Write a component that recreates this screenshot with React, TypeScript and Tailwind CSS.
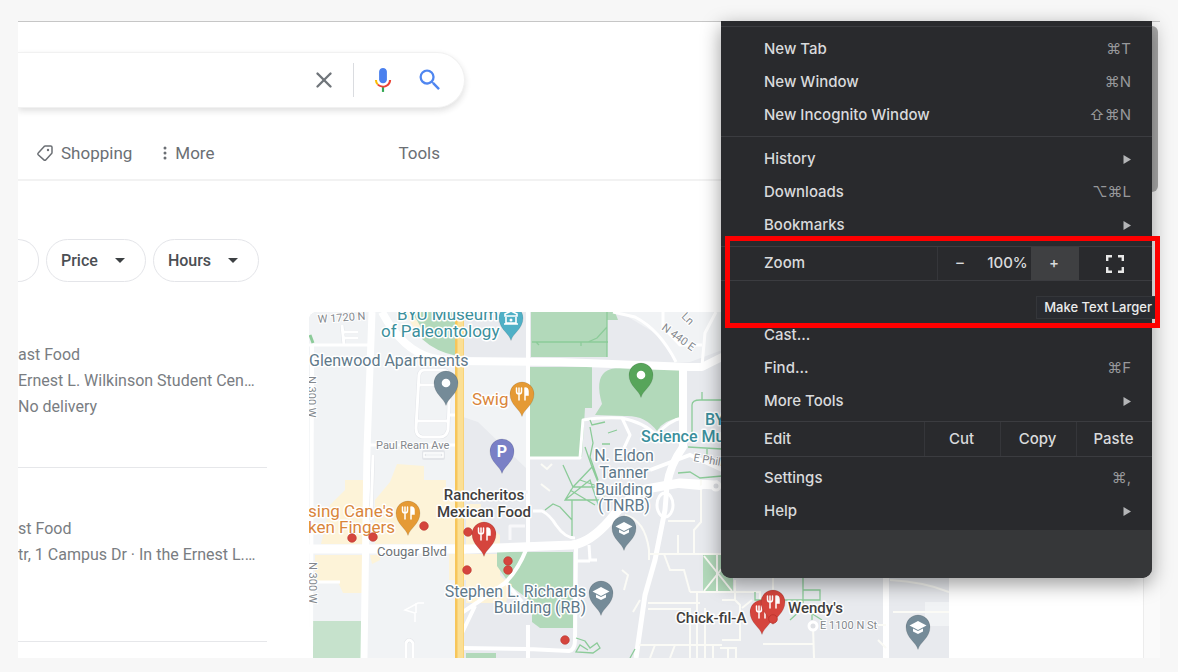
import type { ReactNode } from "react";
import { X } from "lucide-react";

const shopResults = [
  { id: 1, lines: ["ast Food", "Ernest L. Wilkinson Student Cen…", "No delivery"] },
  { id: 2, lines: ["st Food", "tr, 1 Campus Dr · In the Ernest L.…"] },
];

export default function App() {
  return (
    <div className="min-h-screen bg-[#f7f7f7] px-[18px] pt-[21px] pb-[14px] font-[Roboto,sans-serif]">
      <div className="relative bg-white border-t border-[#c6c6c6]">
        {/* Page */}
        <div className="overflow-hidden pr-[17px]">
          <SearchBar />
          <Tabs />
          <Filters />
          <div className="flex items-start gap-[42px] mt-[30px]">
            <ResultList />
            <div className="flex-1 max-w-[640px] h-[346px] overflow-hidden rounded-tl-lg">
              <CampusMap />
            </div>
          </div>
        </div>

        {/* Scrollbar */}
        <div className="absolute inset-y-0 right-0 w-[17px] bg-[#fafafa] border-l border-[#ececec]">
          <div className="ml-0.5 mt-1 h-[166px] w-3 rounded-full bg-[#ababab]" />
        </div>

        <ChromeMenu />
      </div>
    </div>
  );
}

function SearchBar() {
  return (
    <form className="mt-[30px] flex h-14 w-[447px] items-center rounded-r-full border border-l-0 border-[#f1f1f1] bg-white pr-5 shadow-[0_3px_6px_rgba(32,33,36,0.14)]">
      <input aria-label="Search" className="min-w-0 flex-1 bg-transparent outline-none" />
      <button type="button" aria-label="Clear" className="text-[#70757a]">
        <X className="h-[26px] w-[26px]" strokeWidth={2.2} />
      </button>
      <div className="ml-4 h-[34px] w-px bg-[#dadce0]" />
      <button type="button" aria-label="Search by voice" className="ml-4">
        <svg viewBox="0 0 24 24" className="h-[26px] w-[26px]">
          <path fill="#4a80ee" d="M12 15c1.9 0 3.6-1.4 3.6-3.2V4.3C15.600 2.500 13.900 1 12 1S8.400 2.500 8.400 4.300v7.500C8.400 13.600 10.100 15 12 15z" />
          <path fill="#34a853" d="M11 18.500h2V23h-2z" />
          <path fill="#fbbc04" d="M6.500 16.700A7 7 0 0 1 4.500 12h2c0 1.500.6 2.800 1.500 3.700z" />
          <path fill="#ea4335" d="M12 17.300c-1.500 0-3-.6-4-1.600l-1.500 1c1.300 1.500 3.300 2.300 5.500 2.300 4.200 0 7.500-3 7.500-7h-2c0 3-2.500 5.300-5.500 5.300z" />
        </svg>
      </button>
      <button type="submit" aria-label="Google Search" className="ml-5">
        <svg viewBox="0 0 24 24" className="h-7 w-7">
          <path
            fill="#4f86f0"
            d="M15.500 14h-.79l-.28-.27A6.470 6.470 0 0 0 16 9.500 6.500 6.500 0 1 0 9.500 16c1.610 0 3.090-.59 4.230-1.570l.27.28v.79l5 4.990L20.490 19l-4.990-5zm-6 0C7.010 14 5 11.990 5 9.500S7.010 5 9.500 5 14 7.010 14 9.500 11.990 14 9.500 14z"
          />
        </svg>
      </button>
    </form>
  );
}

function Tabs() {
  return (
    <div className="-mr-[17px] border-b-2 border-[#f2f2f2] pt-[33px] pb-[14px]">
      <nav className="flex w-[422px] items-center pl-[18px] text-[17px] leading-6 text-[#6b6f74]">
        <a href="#shopping" className="flex items-center gap-[7px]">
          <svg viewBox="0 0 18 18" className="h-[18px] w-[18px]" fill="none" stroke="currentColor" strokeWidth="1.500">
            <path d="M9.200 2h5.500c.8 0 1.300.5 1.300 1.300v5.300c0 .4-.1.700-.4 1L9.700 15.900c-.5.5-1.300.5-1.800 0L2.200 10.700c-.5-.5-.5-1.200 0-1.700L8.200 2.400c.3-.3.600-.4 1-.4z" />
            <circle cx="12" cy="6" r="1.200" fill="currentColor" stroke="none" />
          </svg>
          Shopping
        </a>
        <a href="#more" className="ml-[31px] flex items-center gap-2">
          <svg viewBox="0 0 4 16" className="h-4 w-1" fill="currentColor">
            <circle cx="2" cy="3" r="1.500" />
            <circle cx="2" cy="8" r="1.500" />
            <circle cx="2" cy="13" r="1.500" />
          </svg>
          More
        </a>
        <button className="ml-auto">Tools</button>
      </nav>
    </div>
  );
}

function Filters() {
  return (
    <div className="mt-[58px] flex gap-[7px] text-[16px] font-medium text-[#4b4f54]">
      <div className="h-[43px] w-[21px] rounded-r-full border border-l-0 border-[#e4e5e9]" />
      <FilterChip label="Price" />
      <FilterChip label="Hours" />
    </div>
  );
}

function FilterChip({ label }: { label: string }) {
  return (
    <button className="flex h-[43px] items-center gap-[17px] rounded-full border border-[#e4e5e9] pl-[14px] pr-5">
      {label}
      <svg viewBox="0 0 10 5" className="h-[5px] w-[10px]" fill="#3c4043">
        <path d="M0 0h10L5 5z" />
      </svg>
    </button>
  );
}

function ResultList() {
  return (
    <ul className="w-[249px] shrink-0 text-[16px] text-[#797d82]">
      {shopResults.map((r) => (
        <li key={r.id} className="border-b border-[#e6e7ea] pt-[30px] pb-[47px] last:pt-12 last:pb-[73px]">
          {r.lines.map((line) => (
            <p key={line} className="whitespace-nowrap leading-[26px]">
              {line}
            </p>
          ))}
        </li>
      ))}
    </ul>
  );
}

/* ---------- Map ---------- */

function Pin({ x, y, color, children }: { x: number; y: number; color: string; children?: ReactNode }) {
  return (
    <g transform={`translate(${x} ${y})`}>
      <path d="M0 22.500C-2 15-12 11-12 0A12 12 0 0 1 12 0C12 11 2 15 0 22.500Z" fill={color} stroke="#00000022" strokeWidth="0.800" />
      {children}
    </g>
  );
}

function Fork() {
  return (
    <g fill="none" stroke="#fff" strokeWidth="1.500" strokeLinecap="round">
      <path d="M-5.500-6v3.500q0 2.500 2.500 2.500t2.500-2.500V-6M-3-6V6" />
      <path d="M3-6V6M3-6q3 0 3 3.500V1H3" fill="#fff" />
    </g>
  );
}

function GradCap() {
  return (
    <g fill="#fff">
      <path d="M0-6L-8.500-1.500 0 3 8.500-1.500Z" />
      <path d="M-5 1.500V4.500L0 7 5 4.500V1.500L0 4Z" />
    </g>
  );
}

function CampusMap() {
  const food = "#d5453d";
  const orange = "#e59a35";
  const slate = "#758b98";
  return (
    <svg viewBox="309 312 640 346" preserveAspectRatio="xMinYMin slice" className="h-full w-full" role="img" aria-label="Map of restaurants near campus">
      <rect x="309" y="312" width="640" height="346" fill="#e8eaee" />
      <path d="M309 312H528V470L466 420V560L456 658H309Z" fill="#f1f3f5" />
      <path d="M463 312H528V358H463ZM463 417L478 422 528 470V545H463Z" fill="#e8eaee" />
      <path d="M620 312H722V350L690 362H676L655 333Z" fill="#f1f3f5" />

      {/* Commercial blocks */}
      <g fill="#fdf3d8">
        <path d="M397 464L424 466V480H446V490H456V544H375V500L390 482Z" />
        <path d="M321 544L330 505 345 490V480H363V544ZM315 555H362V593H343L338 582H315Z" />
        <path d="M466 504H481V520L500 535V545H466ZM449 554H500V575L510 585 506 603H466V580H449ZM370 555H380V560L372 564ZM404 312H428L418 334Z" />
      </g>

      {/* Parks */}
      <g fill="#b2d9ba">
        <path d="M410 312H457V356Q436 352 422 339 424 326 410 312Z" />
        <path d="M531 312H615L618 320H607V357H531ZM530 367H592V408H585L582 457H530Z" />
        <path d="M595 415L602 404Q595 380 605 372 610 368 620 368L680 370V418Q663 420 657 431 645 415 625 416Z" />
        <path d="M497 552H573V628H540L532 622V602L512 587 497 566ZM466 653H496V658H466Z" />
        <path d="M703 555H733V592H703Z" />
      </g>
      <path d="M313 621H361V658H313Z" fill="#c6e2cc" />
      <path d="M949 602H925V626H949Z" fill="#f1f3f5" />

      {/* Wide roads */}
      <g fill="none" stroke="#fff" strokeLinejoin="round">
        <path d="M382 312Q402 350 432 358 445 361 456 361L560 362 690 367H702L724 356" strokeWidth="8" />
        <path d="M372 312L367 450 364 658" strokeWidth="7" />
        <path d="M309 549H470L572 545Q590 543 610 520 628 496 646 489L680 483 715 485" strokeWidth="9" />
        <path d="M683 367V447Q670 465 667 485" strokeWidth="8" />
        <path d="M667 485L665 510 655 560 645 595 636 658" strokeWidth="5" />
        <path d="M312 345L311 658" strokeWidth="4" />
        <path d="M886 575V658" strokeWidth="6" />
        <path d="M528 312V545M528 625V658M462 648L528 649 569 651Q575 650 575 640L576 548" strokeWidth="4" />
        <path d="M460 614L478 602 505 583Q518 570 526 550M462 633L475 606M507 584L522 602" strokeWidth="4" />
      </g>

      {/* Small streets */}
      <g fill="none" stroke="#e3e5e9" strokeWidth="4" strokeLinejoin="round">
        <path d="M424 370H442Q450 370 450 380L448 430Q446 438 438 437H422Q416 436 416 428L419 375Q420 370 424 370ZM419 385H448M417 421H448M424 452H443V458H424Z" />
        <path d="M373 455L371 520M406 658V643Q409 637 413 643V658M342 325L344 345M344 332H358M344 338H358" />
      </g>
      <g fill="none" stroke="#fff" strokeWidth="3" strokeLinejoin="round">
        <path d="M309 345H368M342 325L344 345M344 332H358M344 338H358M370 445H458" />
        <path d="M424 370H442Q450 370 450 380L448 430Q446 438 438 437H422Q416 436 416 428L419 375Q420 370 424 370ZM419 385H448M417 421H448M450 415H458" />
        <path d="M373 455L371 520M406 658V643Q409 637 413 643V658M311 582H340" />
        <path d="M528 458H580L583 420Q600 417 622 418 645 423 656 435 670 420 682 418M622 418L630 435 624 448" />
        <path d="M613 312L635 317Q660 330 676 362M663 312V327L680 345H702M716 312L705 333 702 366" />
        <path d="M533 511H542Q550 515 556 525 565 538 575 538M589 545L590 560H597M577 561H590" />
        <path d="M525 526H510V540M528 492H515" stroke="#f8f8fa" />
        <ellipse cx="665" cy="505" rx="8" ry="12" />
      </g>
      <g fill="none" stroke="#fff" strokeWidth="1.500">
        <path d="M424 603H418L405 610 415 613V622M416 603V613M424 453H443V457H424Z" />
      </g>
      <g fill="none" stroke="#fbfbf6" strokeWidth="2">
        <path d="M650 554H721M664 554L670 570H684L690 592M694 553V530L701 522V480M668 521H695M678 535V555" />
        <path d="M648 603H700M648 609H690V658M697 592V658M690 592H722M639 645H722M655 645L650 658M675 645L670 658M705 608V658M713 645V658" />
        <path d="M625 515Q645 520 649 550V560M624 590L628 575 622 570M633 612L640 600M541 484L550 491M541 464L547 469 552 464" />
        <path d="M704 556L732 591M732 556L704 591M717 555V592" />
        <path d="M735 580V600L740 605V640H722M735 600H722M752 600L742 608M720 592H760V600M763 644H813M813 626L814 658M878 625H886M878 640L886 648" />
        <path d="M720 648H736V658M728 648V658M773 578V592M890 580Q925 582 949 592M893 612H949" />
      </g>
      <path d="M650 470L690 455 722 470M668 485L700 488 718 482" fill="none" stroke="#fff" strokeWidth="4" />
      <circle cx="716" cy="486" r="4" fill="#dfe1e5" stroke="#fff" strokeWidth="3" />

      {/* Footpaths */}
      <g fill="none" stroke="#8ccb99" strokeWidth="1.300">
        <path d="M532 342H608M607 312V357M607 327L597 338 588 342M536 342L539 345M581 342V346" />
        <path d="M590 420L592 425 605 422M590 427L593 443 590 457M608 433L617 430M602 444H610M563 465L573 487 592 467 585 447M573 487H600L580 480M592 467L605 500 565 500 573 487M565 500L590 480 600 510M570 490L595 505M545 510L553 504 560 507 572 520M572 500V536M590 457L598 480" />
        <path d="M692 440V405Q692 400 700 400H722M702 392V400M688 447L722 449M707 449V458M678 473L690 472 700 478 722 476" />
        <path d="M576 638L585 641 590 648 597 643 600 648 593 653 576 652 580 645 588 650M635 649L630 658" />
        <path d="M803 578V603M803 590H820V600H755V592M790 620L803 608 822 620M812 605V620" />
        <path d="M310 335L313 343" strokeWidth="3" />
      </g>

      {/* State street */}
      <path d="M459.500 312V658" stroke="#f7c65b" strokeWidth="9" />
      <path d="M460.500 312V658" stroke="#fbdf95" strokeWidth="6" />

      {/* Street names */}
      <g className="font-[Roboto,sans-serif]" fill="#84888d" stroke="#fff" strokeWidth="2" paintOrder="stroke" fontSize="11">
        <text x="318" y="323" transform="rotate(-4 318 323)">W 1720 N</text>
        <text x="376" y="449">Paul Ream Ave</text>
        <text x="377" y="556" fontSize="13" fill="#6c7176">Cougar Blvd</text>
        <text x="820" y="629">E 1100 N St</text>
        <text x="661" y="329" transform="rotate(36 661 329)">N 440 E</text>
        <text x="681" y="317" transform="rotate(45 681 317)">Ln</text>
        <text x="693" y="461" transform="rotate(10 693 461)">E Phillips</text>
        <text x="309" y="562" transform="rotate(90 309 562)">N 300 W</text>
        <text x="308" y="376" transform="rotate(90 308 376)">N 300 W</text>
      </g>
      <circle cx="813" cy="626" r="4" fill="#dfe1e5" stroke="#fff" strokeWidth="3" />

      {/* Place names */}
      <g className="font-[Roboto,sans-serif]" stroke="#fff" strokeWidth="3" strokeLinejoin="round" paintOrder="stroke" fontSize="16">
        <g fill="#3b8f9c">
          <text x="397" y="320" fontSize="17">BYU Museum</text>
          <text x="381" y="337" fontSize="17">of Paleontology</text>
          <text x="705" y="425" fontWeight="500">BYU</text>
          <text x="641" y="442" fontWeight="500">Science Museum</text>
        </g>
        <g fill="#60798a">
          <text x="309" y="366">Glenwood Apartments</text>
          <g textAnchor="middle">
            <text x="624" y="461">N. Eldon</text>
            <text x="624" y="478">Tanner</text>
            <text x="624" y="495">Building</text>
            <text x="624" y="511">(TNRB)</text>
          </g>
          <g textAnchor="end">
            <text x="586" y="597">Stephen L. Richards</text>
            <text x="586" y="613">Building (RB)</text>
          </g>
        </g>
        <g fill="#d9853b" fontSize="17">
          <text x="472" y="405">Swig</text>
          <text x="308" y="517">sing Cane's</text>
          <text x="308" y="533">ken Fingers</text>
        </g>
        <g fill="#3f3e3d" fontWeight="500" fontSize="15">
          <text x="484" y="500" textAnchor="middle">Rancheritos</text>
          <text x="484" y="517" textAnchor="middle">Mexican Food</text>
          <text x="676" y="623">Chick-fil-A</text>
          <text x="788" y="613">Wendy's</text>
        </g>
      </g>

      <g fill={food} stroke="#b9322b" strokeWidth="0.600">
        <circle cx="424" cy="526" r="4.300" />
        <circle cx="352" cy="538" r="4.300" />
        <circle cx="373" cy="537" r="4.300" />
        <circle cx="468" cy="532" r="4.300" />
        <circle cx="508" cy="561" r="4.300" />
        <circle cx="508" cy="570" r="4.300" />
        <circle cx="467" cy="570" r="4.300" />
        <circle cx="565" cy="640" r="4.300" />
      </g>

      <Pin x={511} y={318} color="#4fb0c6">
        <path d="M-6-4L0-7 6-4V-2H-6ZM-5-1V5H5V-1M-7 6H7" fill="none" stroke="#fff" strokeWidth="1.600" />
        <circle cy="2" r="1.500" fill="#fff" />
      </Pin>
      <Pin x={446} y={383} color={slate}><circle r="4.300" fill="#fff" /></Pin>
      <Pin x={641} y={375} color="#57a55a"><circle r="4.300" fill="#fff" /></Pin>
      <Pin x={522} y={394} color={orange}><Fork /></Pin>
      <Pin x={502} y={451} color="#7a80c6">
        <text y="6" textAnchor="middle" fontSize="16" fontWeight="700" fill="#fff" className="font-[Roboto,sans-serif]">P</text>
      </Pin>
      <Pin x={408} y={513} color={orange}><Fork /></Pin>
      <Pin x={484} y={534} color={food}><Fork /></Pin>
      <Pin x={624} y={528} color={slate}><GradCap /></Pin>
      <Pin x={601} y={593} color={slate}><GradCap /></Pin>
      <Pin x={918} y={627} color={slate}><GradCap /></Pin>
      <Pin x={762} y={612} color={food}><Fork /></Pin>
      <Pin x={773} y={602} color={food}><Fork /></Pin>
      <circle cx="773" cy="619" r="4.300" fill={food} stroke="#b9322b" strokeWidth="0.800" />
    </svg>
  );
}

/* ---------- Browser menu ---------- */

function MenuItem({ label, keys, submenu }: { label: string; keys?: string; submenu?: boolean }) {
  return (
    <button className="flex h-[33px] w-full items-center justify-between pl-[43px] pr-[21px] text-left">
      <span>{label}</span>
      {keys && <span className="font-normal text-[#97989b]">{keys}</span>}
      {submenu && (
        <svg viewBox="0 0 8 9" className="h-[9px] w-2" fill="#b4b5b7">
          <path d="M0.500 0L8 4.500L0.500 9Z" />
        </svg>
      )}
    </button>
  );
}

function MenuGroup({ children }: { children: ReactNode }) {
  return <div className="border-t border-[#3b3c40] pt-[6px] pb-1">{children}</div>;
}

function ChromeMenu() {
  return (
    <div className="absolute -top-px right-2 w-[431px] rounded-b-[10px] bg-[#292a2d] font-[Inter,sans-serif] text-[15px] font-medium text-[#d9dadc] shadow-[0_6px_20px_rgba(0,0,0,0.4)]">
      <div className="h-[5px]" />
      <MenuGroup>
        <MenuItem label="New Tab" keys="⌘T" />
        <MenuItem label="New Window" keys="⌘N" />
        <MenuItem label="New Incognito Window" keys="⇧⌘N" />
      </MenuGroup>
      <MenuGroup>
        <MenuItem label="History" submenu />
        <MenuItem label="Downloads" keys="⌥⌘L" />
        <MenuItem label="Bookmarks" submenu />
      </MenuGroup>

      <div className="relative">
        <div className="flex h-[34px] items-stretch border-t border-[#3b3c40]">
          <span className="flex flex-1 items-center border-r border-[#35363a] pl-[43px]">Zoom</span>
          <button aria-label="Make Text Smaller" className="w-[46px] pr-0.5">–</button>
          <span className="flex w-[47px] items-center justify-center">100%</span>
          <button aria-label="Make Text Larger" className="w-12 bg-[#3f4042] pr-0.5">+</button>
          <button aria-label="Full Screen" className="flex w-[73px] items-center justify-center pr-0.5">
            <svg viewBox="0 0 18 18" className="h-[18px] w-[18px]" fill="none" stroke="#e8e8e8" strokeWidth="2.400">
              <path d="M1.200 6V1.200H6M12 1.200H16.800V6M16.800 12V16.800H12M6 16.800H1.200V12" />
            </svg>
          </button>
        </div>
        {/* Highlight and tooltip over the zoom row */}
        <div className="pointer-events-none absolute -top-2.5 left-1 -right-2 z-10 h-[92px] border-[5px] border-[#fe0000]" />
        <div role="tooltip" className="absolute top-[50px] -right-1 border border-[#34363a] bg-[#292b30] pr-[3px] pl-[7px] text-[13px] leading-[21px] text-[#ececec]">
          Make Text Larger
        </div>
      </div>

      <div className="border-t border-[#3b3c40] pt-[38px] pb-[3px]">
        <MenuItem label="Cast..." />
        <MenuItem label="Find..." keys="⌘F" />
        <MenuItem label="More Tools" submenu />
      </div>
      <div className="flex h-[35px] items-stretch border-t border-[#3b3c40]">
        <span className="flex flex-1 items-center pl-[43px]">Edit</span>
        <button className="w-[76px] border-l border-[#35363a] pr-0.5">Cut</button>
        <button className="w-[76px] border-l border-[#35363a] pr-0.5">Copy</button>
        <button className="w-[76px] border-l border-[#35363a] pr-0.5">Paste</button>
      </div>
      <div className="border-t border-[#3b3c40] pt-[5px] pb-0.5">
        <MenuItem label="Settings" keys="⌘," />
        <MenuItem label="Help" submenu />
      </div>
      <div className="h-12 rounded-b-[10px] bg-[#363739]" />
    </div>
  );
}
